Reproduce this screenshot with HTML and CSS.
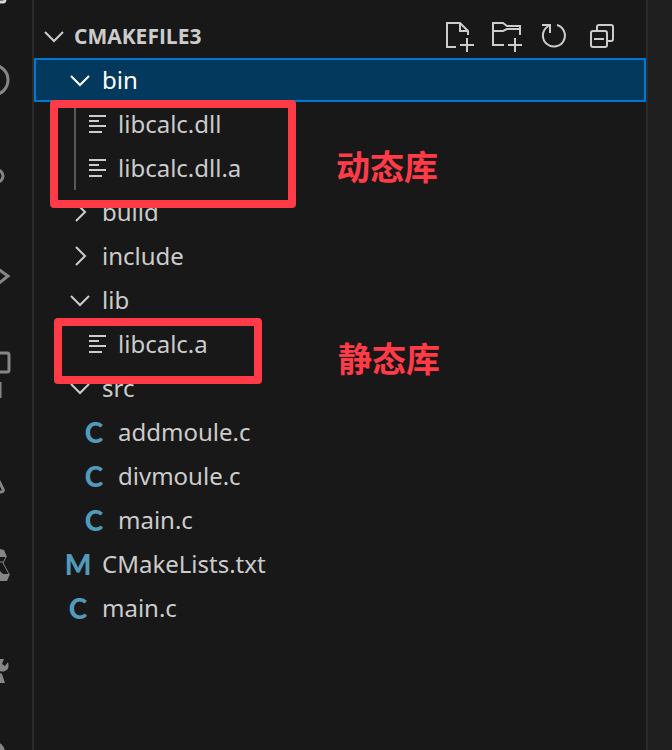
FILE: index.html
```
<!DOCTYPE html>
<html lang="zh-CN">
<head>
    <meta charset="UTF-8">
    <meta name="viewport" content="width=device-width, initial-scale=1.0">
    <title>CMAKEFILE3</title>
    <link rel="stylesheet" href="styles.css">
</head>
<body>
    <svg class="sprites" aria-hidden="true">
        <symbol id="down" viewBox="0 0 24 24"><path d="M5 8l9 9 9-9"/></symbol>
        <symbol id="right" viewBox="0 0 24 24"><path d="M10 3l9 9-9 9"/></symbol>
        <symbol id="lines" viewBox="0 0 24 24"><path d="M7 4h17M7 9h10M7 14h17M7 20h13"/></symbol>
    </svg>

    <div class="window">
        <nav class="activity-bar" aria-label="Activity bar">
            <button class="activity first active" aria-label="Explorer">
                <svg viewBox="0 0 32 34"><path d="M0 2h3q2 0 2-3"/></svg>
            </button>
            <button class="activity" aria-label="Search">
                <svg viewBox="0 0 32 96"><circle cx="-7" cy="46" r="15"/></svg>
            </button>
            <button class="activity" aria-label="Source control">
                <svg viewBox="0 0 32 96"><circle cx="-3" cy="46" r="6"/></svg>
            </button>
            <button class="activity" aria-label="Run and debug">
                <svg viewBox="0 0 32 96"><path d="M-2 43l10 7-10 8"/></svg>
            </button>
            <button class="activity" aria-label="Extensions">
                <svg viewBox="0 0 32 96"><path d="M-4 31H7q2 0 2 2v15q0 2-2 2H-4"/><path d="M0 60v16"/></svg>
            </button>
            <button class="activity" aria-label="Testing">
                <svg viewBox="0 0 32 96"><path d="M-2 61l5 10q1 3-2 3h-4"/></svg>
            </button>
            <button class="activity" aria-label="CMake">
                <svg viewBox="0 0 32 96"><path class="fill" d="M0 35l4 1 3 7H0z"/><path class="thin" d="M6 43l-3 6 6 11M0 48h3"/><path class="fill" d="M0 57l3 3h7l-3 7H0z"/></svg>
            </button>
            <button class="activity" aria-label="Tools">
                <svg viewBox="0 0 32 96"><path class="fill" d="M0 49h4l-2 5 3 2 3-4q2 7-3 9-3 1-5 0zM0 63l2 1 3 9H0z"/></svg>
            </button>
            <button class="activity" aria-label="Accounts">
                <svg viewBox="0 0 32 96"><circle class="fill" cx="-5" cy="46" r="10"/></svg>
            </button>
        </nav>

        <aside class="sidebar">
            <header class="header">
                <button class="title"><svg class="icon"><use href="#down"/></svg>CMAKEFILE3</button>
                <div class="actions">
                    <button aria-label="New file">
                        <svg viewBox="0 0 32 32"><path d="M14 27H5V3h13l8 8v4M18 3v8h8M18 25h14M25 18v14"/></svg>
                    </button>
                    <button aria-label="New folder">
                        <svg viewBox="0 0 32 32"><path d="M14 25H3V3h10l4 3h13v9M3 11h10l4-2h13M18 25h14M25 18v14"/></svg>
                    </button>
                    <button aria-label="Refresh">
                        <svg viewBox="0 0 32 32"><path d="M19 5a11 11 0 1 1-10 2l2-2M4 5h8v8"/></svg>
                    </button>
                    <button aria-label="Collapse folders">
                        <svg viewBox="0 0 32 32"><rect x="5" y="11" width="16" height="16" rx="2"/><path d="M11 11V7q0-2 2-2h12q2 0 2 2v12q0 2-2 2h-4M8 19h10"/></svg>
                    </button>
                </div>
            </header>

            <ul class="tree">
                <li>
                    <button class="row selected"><svg class="icon"><use href="#down"/></svg>bin</button>
                    <ul class="children guide">
                        <li><button class="row"><svg class="icon"><use href="#lines"/></svg>libcalc.dll</button></li>
                        <li><button class="row"><svg class="icon"><use href="#lines"/></svg>libcalc.dll.a</button></li>
                        <li class="mark mark-dynamic"><span>动态库</span></li>
                    </ul>
                </li>
                <li><button class="row"><svg class="icon"><use href="#right"/></svg>build</button></li>
                <li><button class="row"><svg class="icon"><use href="#right"/></svg>include</button></li>
                <li>
                    <button class="row"><svg class="icon"><use href="#down"/></svg>lib</button>
                    <ul class="children">
                        <li><button class="row"><svg class="icon"><use href="#lines"/></svg>libcalc.a</button></li>
                        <li class="mark mark-static"><span>静态库</span></li>
                    </ul>
                </li>
                <li>
                    <button class="row"><svg class="icon"><use href="#down"/></svg>src</button>
                    <ul class="children">
                        <li><button class="row"><span class="letter">C</span>addmoule.c</button></li>
                        <li><button class="row"><span class="letter">C</span>divmoule.c</button></li>
                        <li><button class="row"><span class="letter">C</span>main.c</button></li>
                    </ul>
                </li>
                <li><button class="row"><span class="letter">M</span>CMakeLists.txt</button></li>
                <li><button class="row"><span class="letter">C</span>main.c</button></li>
            </ul>
        </aside>

        <main class="editor"></main>
    </div>
</body>
</html>
```
FILE: styles.css
```
* {
    box-sizing: border-box;
}

body {
    margin: 0;
    background: #181818;
    color: #cccccc;
    font-family: "Noto Sans", "Noto Sans CJK SC", sans-serif;
    font-size: 24px;
}

button {
    border: none;
    padding: 0;
    background: none;
    color: inherit;
    font: inherit;
    cursor: pointer;
}

ul {
    list-style: none;
    margin: 0;
    padding: 0;
}

svg {
    display: block;
    fill: none;
    stroke: currentColor;
    stroke-width: 2;
}

.sprites {
    display: none;
}

.window {
    display: grid;
    grid-template-columns: 32px 1fr 24px;
    height: 100vh;
    overflow: hidden;
}

/* Activity bar */
.activity-bar {
    display: flex;
    flex-direction: column;
    overflow: hidden;
    color: #868686;
}

.activity {
    flex: none;
    height: 96px;
}

.activity.first {
    height: 34px;
}

.activity.active {
    color: #d7d7d7;
}

.activity svg {
    width: 32px;
    height: 100%;
    stroke-width: 3;
}

.activity .fill {
    fill: currentColor;
    stroke: none;
}

.activity .thin {
    stroke-width: 1;
}

/* Explorer */
.sidebar {
    padding-top: 14px;
    border-left: 2px solid #2b2b2b;
    border-right: 2px solid #2b2b2b;
}

.header {
    display: flex;
    align-items: center;
    justify-content: space-between;
    height: 44px;
    padding: 0 28px 0 6px;
}

.title {
    display: flex;
    align-items: center;
    gap: 10px;
    font-family: "Open Sans", sans-serif;
    font-size: 21px;
    font-weight: bold;
}

.icon {
    flex: none;
    width: 24px;
    height: 24px;
}

.actions {
    display: flex;
    gap: 16px;
}

.actions svg {
    width: 32px;
    height: 32px;
}

.row {
    display: flex;
    align-items: center;
    gap: 12px;
    width: 100%;
    height: 44px;
    padding-left: 32px;
    line-height: 46px;
    text-align: left;
}

.row.selected {
    background: #04395e;
    color: #ffffff;
    box-shadow: inset 0 0 0 2px #0078d4;
}

.children {
    position: relative;
}

.children .row {
    padding-left: 48px;
}

.guide::before {
    content: "";
    position: absolute;
    top: 0;
    bottom: 0;
    left: 40px;
    width: 2px;
    background: #585858;
}

.letter {
    display: flex;
    flex: none;
    justify-content: center;
    width: 24px;
    color: #519aba;
    font-family: Lato, sans-serif;
    font-size: 28px;
    font-weight: 900;
    line-height: 42px;
}

/* Red annotations over the tree */
.mark {
    position: absolute;
    z-index: 1;
    border: 8px solid #ff3b47;
    border-radius: 4px;
    pointer-events: none;
}

.mark span {
    position: absolute;
    left: 100%;
    color: #ff3b47;
    font-family: "Noto Sans CJK SC", sans-serif;
    font-size: 34px;
    font-weight: bold;
    line-height: 40px;
    white-space: nowrap;
}

.mark-dynamic {
    top: -2px;
    left: 16px;
    width: 246px;
    height: 108px;
}

.mark-dynamic span {
    top: 38px;
    margin-left: 48px;
}

.mark-static {
    top: -4px;
    left: 20px;
    width: 208px;
    height: 66px;
}

.mark-static span {
    top: 12px;
    margin-left: 84px;
}

.editor {
    background: #1f1f1f;
}
```
